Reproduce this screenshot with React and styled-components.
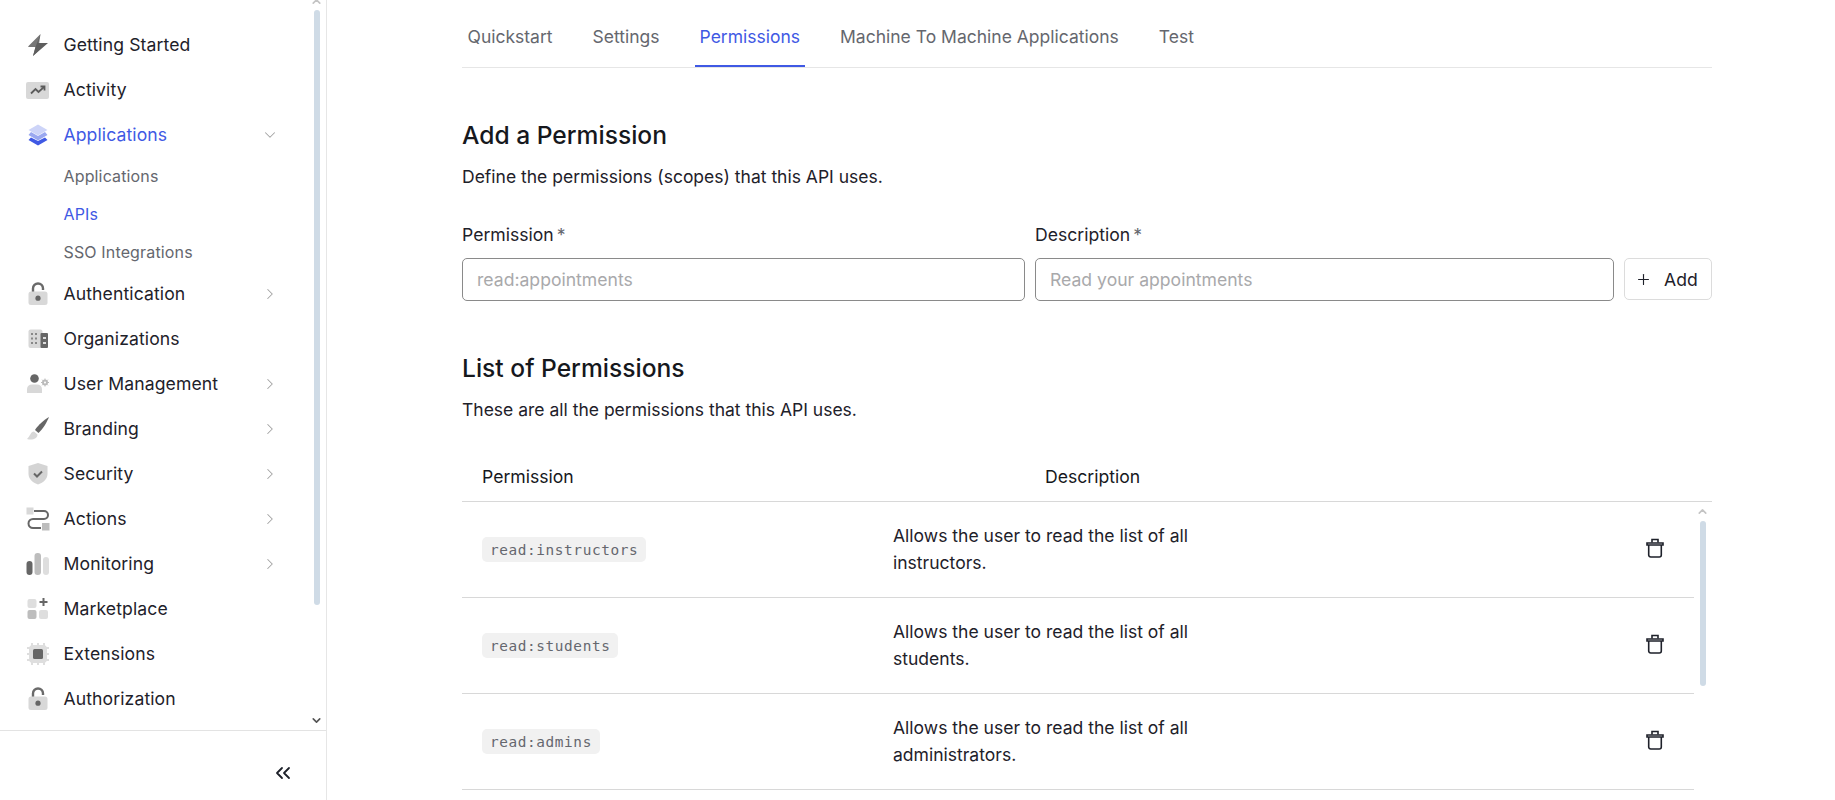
import React from "react";
import styled, { createGlobalStyle } from "styled-components";
import { ChevronRight, ChevronDown, ChevronUp, ChevronsLeft, Plus } from "lucide-react";

const BLUE = "#3f59e4";

const GlobalStyle = createGlobalStyle`
  html, body {
    margin: 0;
    padding: 0;
    height: 800px;
    overflow: hidden;
    background: #fff;
    font-family: "Inter", "Liberation Sans", sans-serif;
    color: #1e212a;
  }
  * { box-sizing: border-box; }
`;

/* duotone icons for the sidebar */
const Bolt = () => (
  <svg width="24" height="24" viewBox="0 0 24 24">
    <path d="M14.5 1 L3 12.5 L2 14 H9.5 L7 23 L12 18 Z" fill="#777" />
    <path d="M14.5 1 L12 10 H22 L7 23 L9.5 14 Z" fill="#5e5e5e" />
  </svg>
);
const ActivityIcon = () => (
  <svg width="24" height="24" viewBox="0 0 24 24">
    <rect x="0" y="4" width="23" height="17" rx="2" fill="#d8d8d8" />
    <path d="M5 15.5 L9.5 11 L12.5 14 L18 9" fill="none" stroke="#5c5c5c" strokeWidth="1.8" />
    <path d="M14.5 8.5 H18.5 V12.5" fill="none" stroke="#5c5c5c" strokeWidth="1.8" />
  </svg>
);
const Layers = () => (
  <svg width="24" height="24" viewBox="0 0 24 24">
    <path d="M12 1.5 L21.5 7 L12 12.5 L2.5 7 Z" fill="#cdd4f8" />
    <path d="M5 9 L12 13 L19 9 L21.5 12 L12 17.5 L2.5 12 Z" fill="#9aa8f0" />
    <path d="M5 14.5 L12 18 L19 14.5 L21.5 17 L12 22.5 L2.5 17 Z" fill={BLUE} />
  </svg>
);
const Lock = () => (
  <svg width="24" height="24" viewBox="0 0 24 24">
    <path d="M7 10 V6.5 a5 5 0 0 1 10 0 V8" fill="none" stroke="#6a6a6a" strokeWidth="2.4" />
    <rect x="2.5" y="9.5" width="19" height="13.5" rx="2.5" fill="#d8d8d8" />
    <circle cx="12" cy="16.2" r="2.6" fill="#666" />
  </svg>
);
const Building = () => (
  <svg width="24" height="24" viewBox="0 0 24 24">
    <rect x="2.5" y="2.5" width="14" height="18.5" rx="2" fill="#d8d8d8" />
    <rect x="14.5" y="6" width="7.5" height="15" rx="1" fill="#666" />
    <g fill="#888">
      <rect x="5" y="6" width="2" height="2" />
      <rect x="9" y="6" width="2" height="2" />
      <rect x="5" y="10.5" width="2" height="2" />
      <rect x="9" y="10.5" width="2" height="2" />
      <rect x="5" y="15" width="2" height="2" />
      <rect x="9" y="15" width="2" height="2" />
    </g>
    <rect x="17" y="10" width="3" height="2" fill="#ddd" />
    <rect x="17" y="15" width="3" height="2" fill="#ddd" />
  </svg>
);
const UserGear = () => (
  <svg width="24" height="24" viewBox="0 0 24 24">
    <circle cx="8.5" cy="6.5" r="4.3" fill="#666" />
    <path d="M1 21 V17 a5 5 0 0 1 5 -4.5 h5 a5 5 0 0 1 5 4.5 V21 Z" fill="#d8d8d8" />
    <circle cx="19" cy="10.5" r="2" fill="none" stroke="#bbb" strokeWidth="2" />
    <path d="M19 6.5 V14.5 M15 10.5 H23 M16.2 7.7 L21.8 13.3 M21.8 7.7 L16.2 13.3" stroke="#bbb" strokeWidth="1" />
    <circle cx="19" cy="10.5" r="1" fill="#fff" />
  </svg>
);
const Brush = () => (
  <svg width="24" height="24" viewBox="0 0 24 24">
    <path d="M23 0 C19 2 12 8 9 13 L12.5 16 C17 12 21 5 23 0 Z" fill="#666" />
    <path d="M8 14.5 C4.5 14.5 4.5 19 1 22 C6 23.5 11.5 22 11.5 17.5 Z" fill="#d8d8d8" />
  </svg>
);
const Shield = () => (
  <svg width="24" height="24" viewBox="0 0 24 24">
    <path d="M12 1 L21.5 4 V12 C21.5 17.5 16.5 21 12 22.5 C7.5 21 2.5 17.5 2.5 12 V4 Z" fill="#d4d4d4" />
    <path d="M8 11.5 L11 14.5 L16 9.5" fill="none" stroke="#666" strokeWidth="2" />
  </svg>
);
const Flow = () => (
  <svg width="24" height="24" viewBox="0 0 24 24">
    <rect x="0.5" y="0.5" width="7" height="7" fill="#d8d8d8" />
    <rect x="16" y="16" width="7.5" height="7.5" fill="#bdbdbd" />
    <path d="M8 4 H18 a4 4 0 0 1 0 8 H7 a4.5 4.5 0 0 0 0 9 H15" fill="none" stroke="#666" strokeWidth="2" />
  </svg>
);
const Bars = () => (
  <svg width="24" height="24" viewBox="0 0 24 24">
    <rect x="0.5" y="9" width="6" height="14" rx="3" fill="#666" />
    <rect x="8.5" y="1" width="6.5" height="22" rx="3" fill="#bdbdbd" />
    <rect x="17" y="5" width="6" height="18" rx="3" fill="#dedede" />
  </svg>
);
const Grid = () => (
  <svg width="24" height="24" viewBox="0 0 24 24">
    <rect x="1.5" y="2" width="9" height="9" rx="2" fill="#dedede" />
    <rect x="1.5" y="13" width="9" height="9" rx="2" fill="#bdbdbd" />
    <rect x="13" y="13" width="9" height="9" rx="2" fill="#dedede" />
    <path d="M17.5 1 V9 M13.5 5 H21.5" stroke="#666" strokeWidth="2" />
  </svg>
);
const Chip = () => (
  <svg width="24" height="24" viewBox="0 0 24 24">
    <path d="M6 1 V23 M12 1 V23 M18 1 V23 M1 6 H23 M1 12 H23 M1 18 H23" stroke="#dedede" strokeWidth="2" />
    <rect x="3" y="3" width="18" height="18" rx="4" fill="#dedede" />
    <rect x="7" y="7" width="10" height="10" rx="1.5" fill="#666" />
  </svg>
);
const Trash = () => (
  <svg width="18" height="20" viewBox="0 0 18 20" fill="none" stroke="#1e212a" strokeWidth="1.6">
    <path d="M1 5 H17 V7 H1 Z" />
    <path d="M6 4.5 V1.5 H12 V4.5" />
    <path d="M2.7 7 V17 a2 2 0 0 0 2 2 H13.3 a2 2 0 0 0 2 -2 V7" />
  </svg>
);

const navItems = [
  { label: "Getting Started", icon: Bolt },
  { label: "Activity", icon: ActivityIcon },
  {
    label: "Applications",
    icon: Layers,
    open: true,
    active: true,
    children: [
      { label: "Applications" },
      { label: "APIs", active: true },
      { label: "SSO Integrations" },
    ],
  },
  { label: "Authentication", icon: Lock, more: true },
  { label: "Organizations", icon: Building },
  { label: "User Management", icon: UserGear, more: true },
  { label: "Branding", icon: Brush, more: true },
  { label: "Security", icon: Shield, more: true },
  { label: "Actions", icon: Flow, more: true },
  { label: "Monitoring", icon: Bars, more: true },
  { label: "Marketplace", icon: Grid },
  { label: "Extensions", icon: Chip },
  { label: "Authorization", icon: Lock },
];

const tabs = ["Quickstart", "Settings", "Permissions", "Machine To Machine Applications", "Test"];

const permissions = [
  { scope: "read:instructors", text: "Allows the user to read the list of all instructors." },
  { scope: "read:students", text: "Allows the user to read the list of all students." },
  { scope: "read:admins", text: "Allows the user to read the list of all administrators." },
];

const App = () => {
  return (
    <Page>
      <GlobalStyle />
      <Sidebar>
        <NavArea>
          <ScrollUp><ChevronUp size={13} strokeWidth={3} color="#c4c4c4" /></ScrollUp>
          <NavThumb />
          <ScrollDown><ChevronDown size={13} strokeWidth={3} color="#555" /></ScrollDown>
          {navItems.map((item) => (
            <React.Fragment key={item.label}>
              <NavRow $active={item.active}>
                <NavIcon><item.icon /></NavIcon>
                <NavLabel>{item.label}</NavLabel>
                {item.more && <ChevronRight size={18} strokeWidth={1.4} color="#a3a3a3" />}
                {item.open && <ChevronDown size={18} strokeWidth={1.4} color="#a3a3a3" />}
              </NavRow>
              {item.children &&
                item.children.map((c) => (
                  <SubRow key={c.label} $active={c.active}>{c.label}</SubRow>
                ))}
            </React.Fragment>
          ))}
        </NavArea>
        <SidebarFoot>
          <ChevronsLeft size={24} strokeWidth={1.8} color="#1e212a" />
        </SidebarFoot>
      </Sidebar>

      <Main>
        <TabBar>
          {tabs.map((t) => (
            <Tab key={t} $active={t === "Permissions"}>{t}</Tab>
          ))}
        </TabBar>

        <Heading>Add a Permission</Heading>
        <Lead>Define the permissions (scopes) that this API uses.</Lead>

        <FormRow>
          <Field $grow={563}>
            <Label>Permission<Star>*</Star></Label>
            <Input placeholder="read:appointments" />
          </Field>
          <Field $grow={579}>
            <Label>Description<Star>*</Star></Label>
            <Input placeholder="Read your appointments" />
          </Field>
          <AddButton><Plus size={17} strokeWidth={1.6} />Add</AddButton>
        </FormRow>

        <Heading $second>List of Permissions</Heading>
        <Lead>These are all the permissions that this API uses.</Lead>

        <TableHead>
          <HeadCell $width={563}>Permission</HeadCell>
          <HeadCell>Description</HeadCell>
        </TableHead>
        <TableBody>
          <TableUp><ChevronUp size={13} strokeWidth={3} color="#c4c4c4" /></TableUp>
          <TableThumb />
          {permissions.map((p) => (
            <Row key={p.scope}>
              <ScopeCell><Code>{p.scope}</Code></ScopeCell>
              <DescCell>{p.text}</DescCell>
              <ActionCell><Trash /></ActionCell>
            </Row>
          ))}
        </TableBody>
      </Main>
    </Page>
  );
};

const Page = styled.div`
  display: flex;
  width: 1835px;
  height: 800px;
  overflow: hidden;
`;

const Sidebar = styled.aside`
  width: 327px;
  flex-shrink: 0;
  height: 800px;
  border-right: 1px solid #e6e6e6;
  display: flex;
  flex-direction: column;
`;

const NavArea = styled.nav`
  position: relative;
  height: 731px;
  padding: 22px 0 0 26px;
  border-bottom: 1px solid #e3e3e3;
`;

const ScrollUp = styled.div`
  position: absolute;
  top: -5px;
  left: 310px;
  line-height: 0;
`;

const ScrollDown = styled.div`
  position: absolute;
  top: 714px;
  left: 310px;
  line-height: 0;
`;

const NavThumb = styled.div`
  position: absolute;
  top: 10px;
  left: 314px;
  width: 6px;
  height: 595px;
  border-radius: 3px;
  background: #cfdbe6;
`;

const NavRow = styled.div`
  display: flex;
  align-items: center;
  height: 45px;
  width: 253px;
  font-size: 17.6px;
  letter-spacing: 0.1px;
  color: ${(p) => (p.$active ? BLUE : "#1e212a")};
`;

const NavIcon = styled.span`
  display: flex;
  width: 24px;
  height: 24px;
  margin-right: 13.5px;
`;

const NavLabel = styled.span`
  flex: 1;
`;

const SubRow = styled.div`
  display: flex;
  align-items: center;
  height: 38px;
  padding-left: 37.5px;
  font-size: 16px;
  letter-spacing: 0.15px;
  color: ${(p) => (p.$active ? BLUE : "#65676e")};
`;

const SidebarFoot = styled.div`
  display: flex;
  align-items: center;
  justify-content: flex-end;
  height: 68px;
  padding: 16px 31px 0 0;
`;

const Main = styled.main`
  width: 1250px;
  margin-left: 135px;
`;

const TabBar = styled.div`
  display: flex;
  gap: 30px;
  height: 68px;
  padding-left: 0.5px;
  border-bottom: 1px solid #e6e6e6;
`;

const Tab = styled.div`
  display: flex;
  align-items: center;
  height: 67px;
  padding: 7px 5px 0;
  font-size: 17.5px;
  color: ${(p) => (p.$active ? BLUE : "#65676e")};
  border-bottom: 2px solid ${(p) => (p.$active ? BLUE : "transparent")};
  margin-bottom: -1px;
`;

const Heading = styled.h2`
  margin: 50px 0 0;
  font-size: 24.6px;
  line-height: 34px;
  font-weight: 500;
  color: #16181d;
`;

const Lead = styled.p`
  margin: 12px 0 0;
  font-size: 17.5px;
  line-height: 26px;
  color: #1e212a;
`;

const FormRow = styled.div`
  display: flex;
  align-items: flex-end;
  gap: 10px;
  margin-top: 32px;
`;

const Field = styled.div`
  flex: 0 0 ${(p) => p.$grow}px;
`;

const Label = styled.label`
  display: block;
  font-size: 17.6px;
  line-height: 26px;
  margin-bottom: 10px;
  color: #1e212a;
`;

const Star = styled.span`
  margin-left: 3px;
  color: #65676e;
`;

const Input = styled.input`
  display: block;
  width: 100%;
  height: 43px;
  padding: 0 14px;
  border: 1px solid #8a8a8a;
  border-radius: 5px;
  outline: none;
  font: 17.6px "Inter", sans-serif;
  color: #1e212a;
  &::placeholder {
    color: #a9a9ab;
  }
`;

const AddButton = styled.button`
  display: flex;
  align-items: center;
  gap: 12px;
  height: 42px;
  width: 88px;
  margin-bottom: 1px;
  padding: 0 0 0 10px;
  background: #fff;
  border: 1px solid #dcdcdc;
  border-radius: 5px;
  font: 17.6px "Inter", sans-serif;
  color: #1e212a;
`;

const TableHead = styled.div`
  display: flex;
  align-items: center;
  height: 58px;
  margin-top: 21px;
  padding: 8px 0 0 20px;
  border-bottom: 1px solid #d8d8d8;
  font-size: 17.6px;
  color: #16181d;
`;

const HeadCell = styled.div`
  width: ${(p) => (p.$width ? `${p.$width}px` : "auto")};
`;

const TableBody = styled.div`
  position: relative;
  width: 1232px;
`;

const TableUp = styled.div`
  position: absolute;
  top: 3px;
  left: 1234px;
  line-height: 0;
`;

const TableThumb = styled.div`
  position: absolute;
  top: 19px;
  left: 1238px;
  width: 6px;
  height: 165px;
  border-radius: 3px;
  background: #cfdbe6;
`;

const Row = styled.div`
  display: flex;
  align-items: center;
  height: 96px;
  border-bottom: 1px solid #d8d8d8;
`;

const ScopeCell = styled.div`
  width: 431px;
  padding-left: 20px;
`;

const Code = styled.code`
  display: inline-block;
  height: 25px;
  padding: 0 8px;
  border-radius: 5px;
  background: #f1f1f1;
  font: 14.4px/27px "DejaVu Sans Mono", monospace;
  letter-spacing: 0.6px;
  color: #65676e;
`;

const DescCell = styled.div`
  width: 310px;
  margin-top: -1px;
  font-size: 17.55px;
  line-height: 27px;
  color: #1e212a;
`;

const ActionCell = styled.div`
  flex: 1;
  display: flex;
  justify-content: flex-end;
  padding-right: 30px;
  margin-top: -4px;
`;

export default App;
